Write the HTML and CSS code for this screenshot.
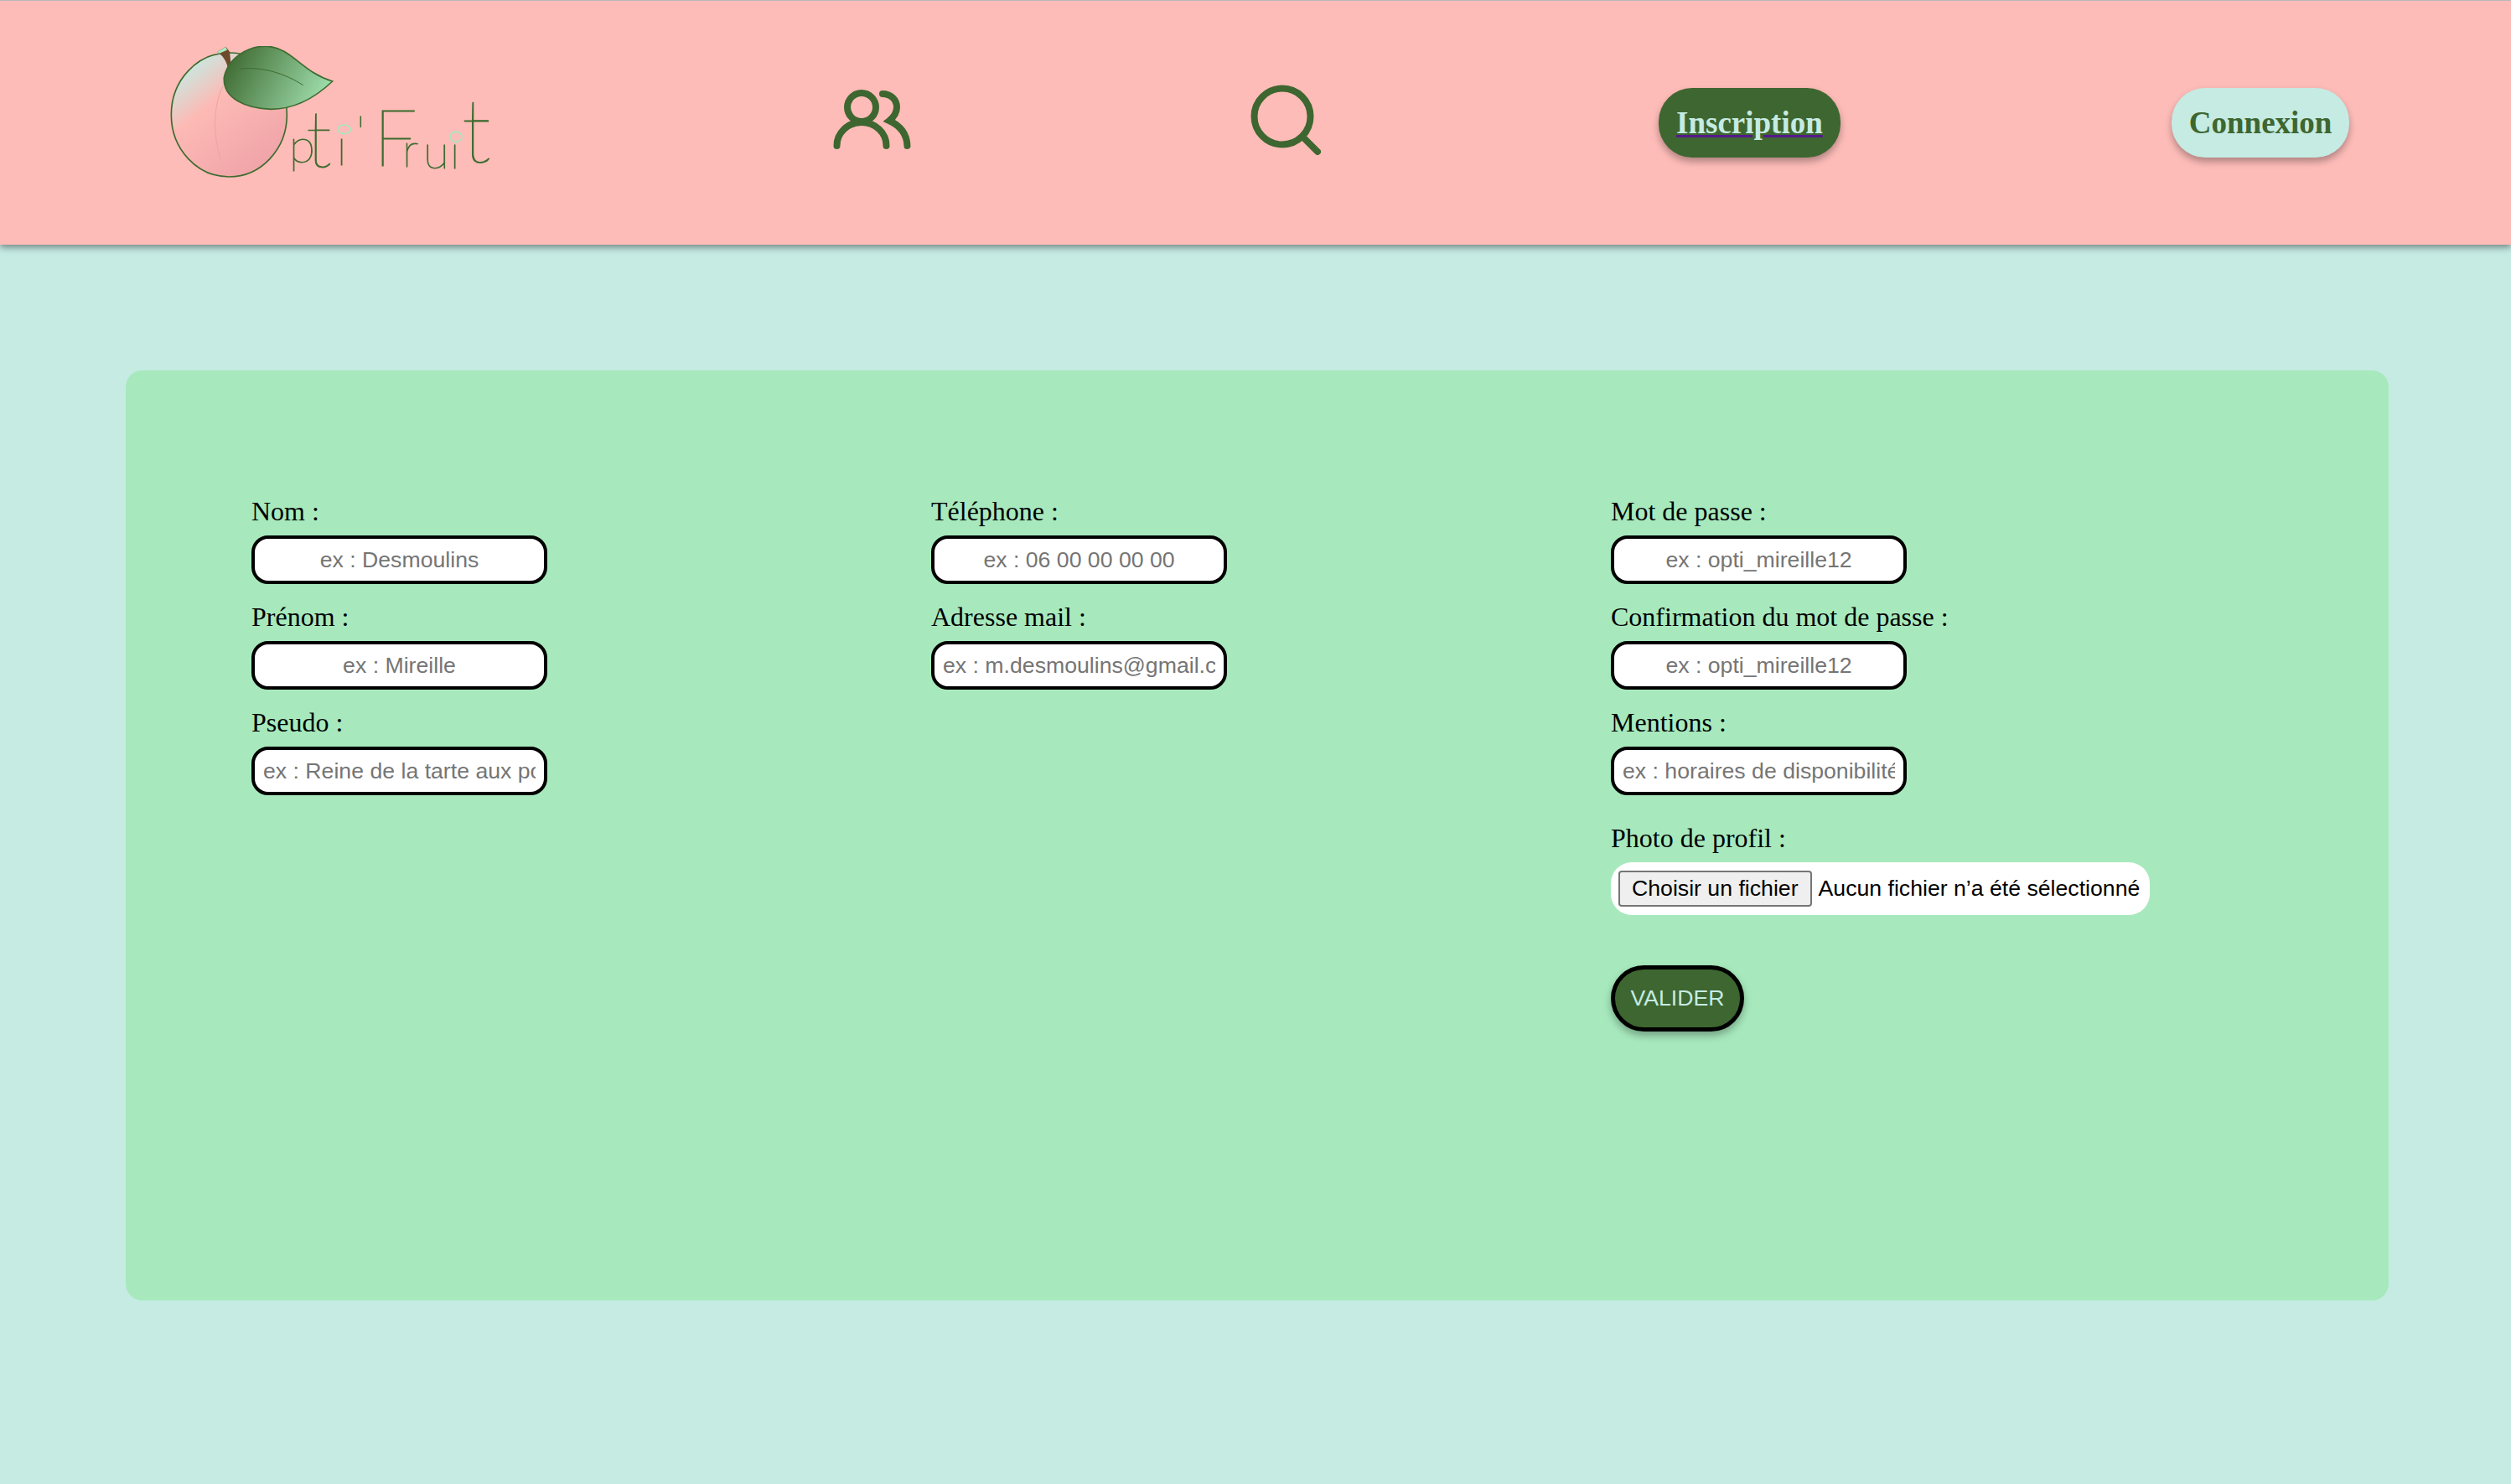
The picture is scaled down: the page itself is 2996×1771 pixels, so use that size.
FILE: index.html
```html
<!DOCTYPE html>
<html lang="fr">
<head>
    <meta charset="UTF-8">
    <title>Opti'Fruit - Inscription</title>
    <link rel="stylesheet" href="styles.css">
</head>
<body>
    <header class="topbar">
        <a class="logo" href="#">
            <svg class="logo-svg" viewBox="120 102 1185 552">
                <defs>
                    <linearGradient id="peach" x1="0.12" y1="0.1" x2="0.75" y2="0.95">
                        <stop offset="0" stop-color="#c5ebe3"/>
                        <stop offset="0.36" stop-color="#fdbab5"/>
                        <stop offset="1" stop-color="#f0a4a8"/>
                    </linearGradient>
                    <linearGradient id="leaf" x1="0" y1="0.3" x2="1" y2="0.6">
                        <stop offset="0" stop-color="#3f6a32"/>
                        <stop offset="1" stop-color="#a0dfae"/>
                    </linearGradient>
                </defs>
                <ellipse cx="340" cy="348" rx="207" ry="222" fill="url(#peach)" stroke="#3e6b30" stroke-width="5"/>
                <path d="M318 245 C282 320 282 420 310 508" fill="none" stroke="#eda4a4" stroke-width="3"/>
                <path d="M298 122 L328 104 L342 122 L348 182 L336 182 C332 160 320 140 306 130 Z" fill="#6d4a2b"/>
                <path d="M298 122 L328 105 L333 116 L305 128 Z" fill="#a7e9bd"/>
                <path d="M322 215 C335 145 410 98 480 103 C565 110 600 195 710 228 C650 285 580 328 490 328 C400 325 318 290 322 215 Z" fill="url(#leaf)" stroke="#3e6b30" stroke-width="5"/>
                <path d="M380 183 C460 175 540 200 605 242" fill="none" stroke="#3e6b30" stroke-width="3"/>
                <text class="logo-text"><tspan x="555" y="520">p</tspan><tspan class="logo-tall" x="615" y="535">t</tspan><tspan class="logo-mid" x="723" y="528">i</tspan><tspan x="795" y="472">'</tspan><tspan class="logo-tall" x="856" y="530">F</tspan><tspan x="960" y="535">r</tspan><tspan x="1035" y="540">u</tspan><tspan x="1130" y="540">i</tspan><tspan class="logo-end" x="1172" y="520">t</tspan></text>
                <ellipse class="logo-dot" cx="752" cy="400" rx="23" ry="16"/>
                <ellipse class="logo-dot" cx="1152" cy="427" rx="21" ry="18"/>
            </svg>
        </a>
        <a class="icon-link link-users" href="#">
            <svg class="icon-users" viewBox="0 0 93 80">
                <circle cx="34" cy="21" r="17"/>
                <path d="M4.5 67 A29.5 28 0 0 1 63.5 67"/>
                <path d="M59 5 C69 5 76 12 76 21 C76 28 72 33 67 37 C80 43 88 53 88.5 67"/>
            </svg>
        </a>
        <a class="icon-link link-search" href="#">
            <svg class="icon-search" viewBox="0 0 84 92">
                <circle cx="38" cy="38" r="33.5"/>
                <path d="M64 64 L80 80"/>
            </svg>
        </a>
        <a class="btn-top btn-dark" href="#">Inscription</a>
        <a class="btn-top btn-light" href="#">Connexion</a>
    </header>

    <main class="panel">
        <form class="form-grid">
            <div class="col">
                <label>Nom :</label>
                <input type="text" placeholder="ex : Desmoulins">
                <label>Prénom :</label>
                <input type="text" placeholder="ex : Mireille">
                <label>Pseudo :</label>
                <input type="text" placeholder="ex : Reine de la tarte aux poires">
            </div>
            <div class="col">
                <label>Téléphone :</label>
                <input type="text" placeholder="ex : 06 00 00 00 00">
                <label>Adresse mail :</label>
                <input type="text" placeholder="ex : m.desmoulins@gmail.com">
            </div>
            <div class="col">
                <label>Mot de passe :</label>
                <input type="text" placeholder="ex : opti_mireille12">
                <label>Confirmation du mot de passe :</label>
                <input type="text" placeholder="ex : opti_mireille12">
                <label>Mentions :</label>
                <input type="text" placeholder="ex : horaires de disponibilité">
                <label class="photo-label">Photo de profil :</label>
                <div class="file-box">
                    <button type="button" class="file-btn">Choisir un fichier</button>
                    <span>Aucun fichier n’a été sélectionné</span>
                </div>
                <button type="button" class="btn-valider">VALIDER</button>
            </div>
        </form>
    </main>
</body>
</html>
```

FILE: styles.css
```css
* {
    box-sizing: border-box;
}
body {
    margin: 0;
    height: 1771px;
    background-color: #c5ebe3;
    font-family: "Liberation Serif", serif;
    overflow: hidden;
}
.topbar {
    height: 292px;
    display: flex;
    align-items: center;
    gap: 395px;
    padding-left: 200px;
    background-color: #fdbcb8;
    border-top: 1px solid #b8b8b8;
    box-shadow: 0 3px 8px rgba(0, 0, 0, 0.45);
}
.logo,
.icon-link {
    display: block;
    line-height: 0;
}
.link-users {
    margin-left: 4px;
}
.link-search {
    margin-left: 10px;
}
.logo-svg {
    width: 395px;
    height: 184px;
}
.logo-text {
    font-family: "Lato", sans-serif;
    font-weight: 100;
    font-size: 170px;
    fill: #3e6b30;
    stroke: #3e6b30;
    stroke-width: 3;
}
.logo-mid {
    font-size: 190px;
}
.logo-tall {
    font-size: 280px;
}
.logo-end {
    font-size: 320px;
}
.logo-dot {
    fill: #fdbcb8;
    stroke: #a7e9bd;
    stroke-width: 5;
}
.icon-users {
    width: 93px;
    height: 80px;
}
.icon-search {
    width: 84px;
    height: 92px;
}
.icon-users *,
.icon-search * {
    fill: none;
    stroke: #3e6630;
    stroke-width: 8;
    stroke-linecap: round;
}
.btn-top {
    height: 83px;
    display: flex;
    align-items: center;
    padding: 0 21px;
    border-radius: 40px;
    font-size: 37px;
    font-weight: bold;
    box-shadow: 0 5px 8px rgba(0, 0, 0, 0.3);
}
.btn-dark {
    margin-left: 8px;
    background-color: #3e6630;
    color: #c5ebe3;
    text-decoration: underline #551a8b;
}
.btn-light {
    background-color: #c5ebe3;
    color: #3e6630;
    text-decoration: none;
}
.panel {
    width: 2700px;
    height: 1110px;
    margin: 150px 0 0 150px;
    padding: 150px 0 0 150px;
    background-color: #a7e9bd;
    border-radius: 20px;
}
.form-grid {
    display: grid;
    grid-template-columns: repeat(3, 811px);
}
.col {
    display: flex;
    flex-direction: column;
    align-items: flex-start;
}
label {
    display: block;
    font-size: 32px;
    line-height: 36px;
    margin-bottom: 11px;
    color: #000;
}
input {
    width: 353px;
    height: 58px;
    margin-bottom: 21px;
    padding: 0 10px;
    border: 4px solid #000;
    border-radius: 20px;
    background-color: #fff;
    font-family: "Liberation Sans", sans-serif;
    font-size: 26.67px;
    text-align: center;
}
.photo-label {
    margin-top: 12px;
}
.file-box {
    width: 643px;
    height: 63px;
    display: flex;
    align-items: center;
    gap: 8px;
    padding: 0 9px;
    border-radius: 25px;
    background-color: #fff;
    font-family: "Liberation Sans", sans-serif;
    font-size: 26.67px;
    white-space: nowrap;
}
.file-btn {
    height: 43px;
    padding: 0 14px;
    border: 2px solid #767676;
    border-radius: 4px;
    background-color: #efefef;
    font-family: inherit;
    font-size: 26.67px;
}
.btn-valider {
    width: 159px;
    height: 79px;
    margin-top: 60px;
    border: 5px solid #000;
    border-radius: 40px;
    background-color: #3e6630;
    color: #c5ebe3;
    font-family: "Liberation Sans", sans-serif;
    font-size: 26.67px;
    box-shadow: 0 5px 10px rgba(0, 0, 0, 0.3);
}
```
